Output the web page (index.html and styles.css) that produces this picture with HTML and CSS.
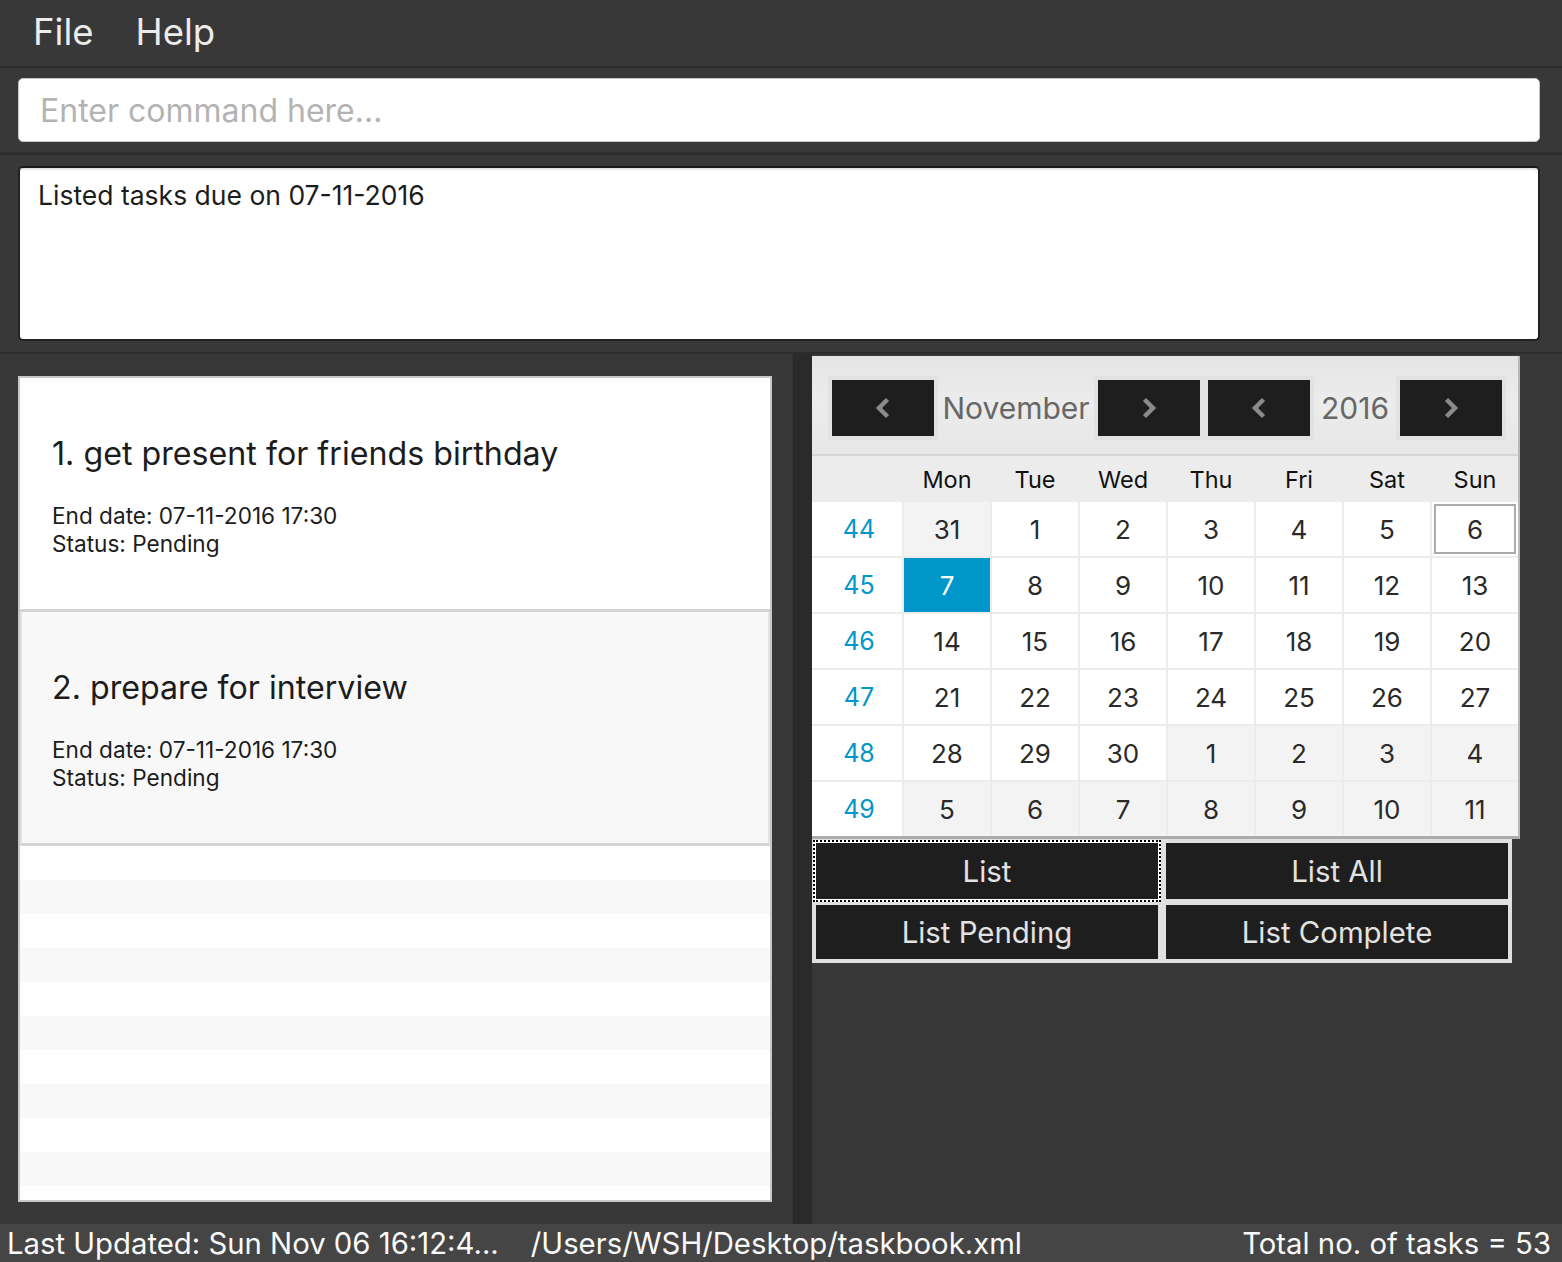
FILE: index.html
```html
<!DOCTYPE html>
<html lang="en">
<head>
<meta charset="utf-8">
<title>TaskBook</title>
<link rel="stylesheet" href="styles.css">
</head>
<body>
<div class="app">
  <div class="menubar">
    <span class="menu-item">File</span>
    <span class="menu-item">Help</span>
  </div>
  <div class="command-area">
    <div class="command-box"><span class="placeholder">Enter command here...</span></div>
  </div>
  <div class="result-area">
    <div class="result-box">Listed tasks due on 07-11-2016</div>
  </div>
  <div class="main">
    <div class="left-pane">
      <div class="task-list">
        <div class="card">
          <div class="card-title">1. get present for friends birthday</div>
          <div class="card-detail">End date: 07-11-2016 17:30</div>
          <div class="card-detail">Status: Pending</div>
        </div>
        <div class="card alt">
          <div class="card-title">2. prepare for interview</div>
          <div class="card-detail">End date: 07-11-2016 17:30</div>
          <div class="card-detail">Status: Pending</div>
        </div>
        <div class="stripe"></div><div class="stripe alt"></div>
        <div class="stripe"></div><div class="stripe alt"></div>
        <div class="stripe"></div><div class="stripe alt"></div>
        <div class="stripe"></div><div class="stripe alt"></div>
        <div class="stripe"></div><div class="stripe alt"></div>
        <div class="stripe"></div>
      </div>
    </div>
    <div class="divider"></div>
    <div class="right-pane">
      <div class="calendar">
        <div class="cal-header">
          <div class="spinner month">
            <div class="nav-btn"><svg class="chev" width="20" height="24" viewBox="0 0 20 24"><polyline points="14.5,3.5 6,12 14.5,20.5" fill="none" stroke="#8a8a8a" stroke-width="4.5"/></svg></div>
            <div class="spin-label">November</div>
            <div class="nav-btn"><svg class="chev" width="20" height="24" viewBox="0 0 20 24"><polyline points="5.5,3.5 14,12 5.5,20.5" fill="none" stroke="#8a8a8a" stroke-width="4.5"/></svg></div>
          </div>
          <div class="spinner year">
            <div class="nav-btn"><svg class="chev" width="20" height="24" viewBox="0 0 20 24"><polyline points="14.5,3.5 6,12 14.5,20.5" fill="none" stroke="#8a8a8a" stroke-width="4.5"/></svg></div>
            <div class="spin-label">2016</div>
            <div class="nav-btn"><svg class="chev" width="20" height="24" viewBox="0 0 20 24"><polyline points="5.5,3.5 14,12 5.5,20.5" fill="none" stroke="#8a8a8a" stroke-width="4.5"/></svg></div>
          </div>
        </div>
        <div class="cal-grid">
          <div class="dow"></div><div class="dow">Mon</div><div class="dow">Tue</div><div class="dow">Wed</div><div class="dow">Thu</div><div class="dow">Fri</div><div class="dow">Sat</div><div class="dow">Sun</div>

          <div class="wk">44</div><div class="day other">31</div><div class="day">1</div><div class="day">2</div><div class="day">3</div><div class="day">4</div><div class="day">5</div><div class="day today">6</div>
          <div class="wk">45</div><div class="day selected">7</div><div class="day">8</div><div class="day">9</div><div class="day">10</div><div class="day">11</div><div class="day">12</div><div class="day">13</div>
          <div class="wk">46</div><div class="day">14</div><div class="day">15</div><div class="day">16</div><div class="day">17</div><div class="day">18</div><div class="day">19</div><div class="day">20</div>
          <div class="wk">47</div><div class="day">21</div><div class="day">22</div><div class="day">23</div><div class="day">24</div><div class="day">25</div><div class="day">26</div><div class="day">27</div>
          <div class="wk">48</div><div class="day">28</div><div class="day">29</div><div class="day">30</div><div class="day other">1</div><div class="day other">2</div><div class="day other">3</div><div class="day other">4</div>
          <div class="wk">49</div><div class="day other">5</div><div class="day other">6</div><div class="day other">7</div><div class="day other">8</div><div class="day other">9</div><div class="day other">10</div><div class="day other">11</div>
        </div>
      </div>
      <div class="button-panel">
        <div class="btn focused">List</div>
        <div class="btn">List All</div>
        <div class="btn">List Pending</div>
        <div class="btn">List Complete</div>
      </div>
    </div>
  </div>
  <div class="statusbar">
    <span class="status-updated">Last Updated: Sun Nov 06 16:12:4...</span>
    <span class="status-path">/Users/WSH/Desktop/taskbook.xml</span>
    <span class="status-total">Total no. of tasks = 53</span>
  </div>
</div>
</body>
</html>
```
FILE: styles.css
```css
* { box-sizing: border-box; }
html, body { margin: 0; padding: 0; }
body {
  background: #383838;
  font-family: Inter, "Noto Sans", "Liberation Sans", sans-serif;
  width: 1562px;
  height: 1262px;
  overflow: hidden;
}
.app {
  display: flex;
  flex-direction: column;
  height: 1262px;
}
.menubar {
  height: 68px;
  border-bottom: 2px solid #2c2c2c;
  display: flex;
  align-items: center;
  padding-left: 33px;
  gap: 42px;
}
.menu-item {
  color: #ececec;
  font-size: 36.5px;
  line-height: 40px;
  padding-bottom: 2px;
}
.command-area {
  padding: 10px 22px 10px 18px;
  border-bottom: 3px solid #2c2c2c;
}
.command-box {
  height: 64px;
  background: #fff;
  border: 1px solid #c4c4c4;
  border-radius: 5px;
  display: flex;
  align-items: center;
  padding-left: 21px;
}
.placeholder {
  color: #b3b3b3;
  font-size: 32px;
}
.result-area {
  padding: 11px 22px 11px 18px;
  border-bottom: 2px solid #2c2c2c;
}
.result-box {
  height: 175px;
  background: #fff;
  border: 2px solid #222;
  border-top-color: #1a1a1a;
  border-radius: 5px;
  padding: 11px 18px 9px;
  font-size: 26.5px;
  color: #1c1c1c;
  box-shadow: inset 0 3px 3px -2px #cfcfcf;
}
.main {
  flex: 1;
  display: flex;
  min-height: 0;
}
.left-pane {
  width: 792px;
  padding: 22px 20px 22px 18px;
}
.task-list {
  height: 826px;
  background: #fff;
  border: 2px solid #c8c8c8;
  display: flex;
  flex-direction: column;
  overflow: hidden;
}
.card {
  height: 234px;
  flex: none;
  background: #fff;
  border-bottom: 3px solid #d4d4d4;
  display: flex;
  flex-direction: column;
  justify-content: center;
  padding-left: 32px;
  padding-top: 4px;
  color: #1c1c1c;
}
.card.alt {
  background: #f8f8f8;
  border-left: 2px solid #e2e2e2;
  border-right: 2px solid #e2e2e2;
  padding-left: 30px;
}
.card-title {
  font-size: 32.2px;
  line-height: 40px;
  margin-bottom: 28px;
}
.card-detail {
  font-size: 22.6px;
  line-height: 28px;
}
.stripe {
  height: 34px;
  flex: none;
  background: #fff;
}
.stripe.alt { background: #f8f8f8; }
.divider {
  width: 20px;
  background: #2a2a2a;
  border-left: 1px solid #333;
}
.right-pane {
  flex: 1;
  padding-top: 2px;
}
.calendar {
  width: 708px;
  background: #ececec;
  border-right: 2px solid #b9b9b9;
  border-bottom: 3px solid #acacac;
}
.cal-header {
  height: 100px;
  background: linear-gradient(#e4e4e4, #ececec 45%, #e7e7e7);
  border-bottom: 2px solid #d6d6d6;
  display: flex;
  align-items: flex-start;
  padding: 24px 0 0 20px;
  gap: 8px;
}
.spinner {
  display: flex;
  align-items: center;
}
.nav-btn {
  width: 102px;
  height: 56px;
  background: #1e1e1e;
  box-shadow: 0 0 0 4px #e2e2e2;
  display: flex;
  align-items: center;
  justify-content: center;
}
.chev { display: block; flex: none; }
.spin-label {
  color: #676767;
  font-size: 30px;
  text-align: center;
}
.month .spin-label { width: 164px; }
.year .spin-label { width: 90px; }
.cal-grid {
  display: grid;
  grid-template-columns: 90px repeat(7, 86px);
  grid-template-rows: 44px repeat(6, 54px);
  gap: 2px;
  background: #ececec;
}
.dow {
  background: #ececec;
  color: #111;
  font-size: 23.5px;
  display: flex;
  align-items: center;
  justify-content: center;
  padding-top: 2px;
}
.wk {
  background: #fff;
  color: #0096c9;
  font-size: 25px;
  display: flex;
  align-items: center;
  justify-content: center;
  padding-left: 4px;
}
.day {
  background: #fff;
  color: #2a2a2a;
  font-size: 26px;
  display: flex;
  align-items: center;
  justify-content: center;
}
.day.other { background: #f3f3f3; }
.day.selected { background: #0096c9; color: #fff; }
.day.today { box-shadow: inset 0 0 0 2px #fff, inset 0 0 0 4px #ababab; }
.button-panel {
  width: 700px;
  background: #e0e0e0;
  padding: 4px;
  display: grid;
  grid-template-columns: 342px 342px;
  grid-template-rows: 56px 54px;
  column-gap: 8px;
  row-gap: 6px;
}
.btn {
  background: #1e1e1e;
  color: #e2e2e2;
  font-size: 29.4px;
  display: flex;
  align-items: center;
  justify-content: center;
}
.btn.focused {
  outline: 2px dotted #000;
  outline-offset: 1px;
  box-shadow: 0 0 0 3px #fff;
}
.statusbar {
  height: 38px;
  background: #454545;
  color: #fafafa;
  font-size: 29.3px;
  display: flex;
  align-items: center;
  padding: 0 11px 0 7px;
  white-space: nowrap;
}
.status-path { margin-left: 32px; }
.status-total { margin-left: auto; }
```
